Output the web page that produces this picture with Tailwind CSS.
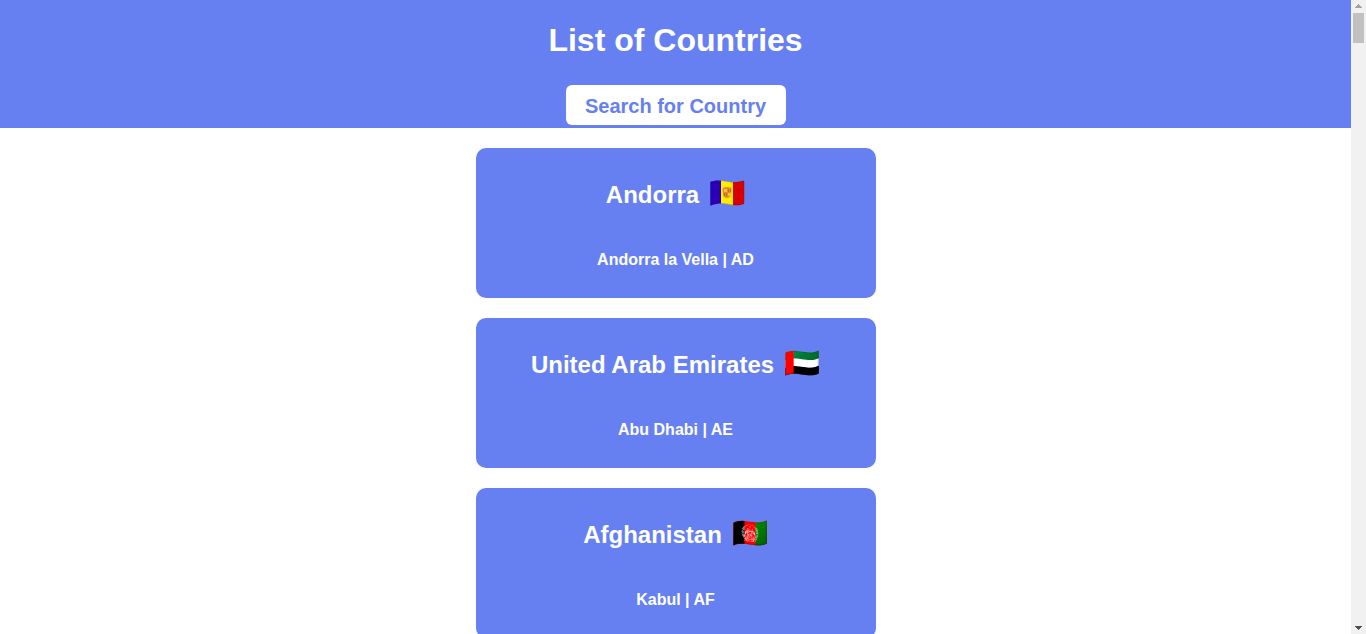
<!DOCTYPE html>
<html lang="en" class="h-full">
<head>
<meta charset="utf-8">
<title>List of Countries</title>
<script src="https://cdn.jsdelivr.net/npm/@tailwindcss/browser@4"></script>
</head>
<body class="flex h-screen overflow-hidden bg-white font-['Liberation_Sans',Arial,sans-serif] font-bold text-white">
<div class="min-w-0 flex-1 overflow-hidden">
  <header class="flex h-32 flex-col items-center bg-[#6680f1] pt-5">
    <h1 class="text-[32px] leading-10">List of Countries</h1>
    <button type="button" class="mt-[25px] h-10 w-[220px] rounded-md bg-white pt-0.5 text-xl text-[#6680f1]">Search for Country</button>
  </header>
  <main class="flex flex-col items-center gap-5 py-5">
    <article class="flex h-[150px] w-[400px] shrink-0 flex-col items-center rounded-[10px] bg-[#6680f1] pt-[29px]">
      <h2 class="flex h-9 items-center gap-[11px] text-2xl">Andorra
        <svg class="mb-1 h-[26px] w-[35px]" viewBox="0 0 35 26" role="img" aria-label="Flag of Andorra">
          <defs><clipPath id="wave"><path d="M.3 2.6Q.3 2 1 1.6C6 -.3 12 .3 17.5 1.5S29 2.2 33.2 .8Q34.2 .4 34.2 1.3V23Q34.2 23.6 33.5 23.9C29 25.8 23 25.4 17.5 24.2S6 23.6 1.2 25.4Q.3 25.7 .3 24.8Z"/></clipPath></defs>
          <g clip-path="url(#wave)">
            <path fill="#2a00b4" d="M0 0h11v26H0z"/><path fill="#ffec00" d="M11 0h12v26H11z"/><path fill="#d80000" d="M23 0h12v26H23z"/>
            <path fill="#dc9028" d="M12.500 8q4.500-2 9 0l-.5 7q-1 3-4 3t-4-3z"/>
            <path fill="#f3c03c" d="M14 9h3v3h-3zM18 13h3v3h-3z"/><path fill="#c86432" d="M18 9h1v3h-1zM20 9h1v3h-1zM14 13h1v3h-1zM16 13h1v3h-1z"/>
            <path fill="none" stroke="#101030" stroke-opacity=".25" d="M.3 2.6Q.3 2 1 1.600C6 -.3 12 .3 17.5 1.5S29 2.2 33.2 .8Q34.2 .4 34.2 1.3V23Q34.2 23.6 33.5 23.9C29 25.8 23 25.4 17.5 24.2S6 23.6 1.2 25.4Q.3 25.7 .3 24.8Z"/>
          </g>
        </svg>
      </h2>
      <p class="mt-[35px] text-base">Andorra la Vella | AD</p>
    </article>
    <article class="flex h-[150px] w-[400px] shrink-0 flex-col items-center rounded-[10px] bg-[#6680f1] pt-[29px]">
      <h2 class="flex h-9 items-center gap-[10px] text-2xl">United Arab Emirates <span class="mb-1 text-[29px] leading-8">🇦🇪</span></h2>
      <p class="mt-[35px] text-base">Abu Dhabi | AE</p>
    </article>
    <article class="flex h-[150px] w-[400px] shrink-0 flex-col items-center rounded-[10px] bg-[#6680f1] pt-[29px]">
      <h2 class="flex h-9 items-center gap-[10px] text-2xl">Afghanistan <span class="mb-1 text-[29px] leading-8">🇦🇫</span></h2>
      <p class="mt-[35px] text-base">Kabul | AF</p>
    </article>
  </main>
</div>
<div class="flex w-[15px] shrink-0 flex-col items-center justify-between bg-[#f1f1f1]" aria-hidden="true">
  <div class="flex flex-col items-center">
    <svg class="h-[13px] w-[15px]" viewBox="0 0 15 13" shape-rendering="crispEdges"><path fill="#a3a3a3" d="M7 4h1v1h1v1h1v1h1v1H4V7h1V6h1V5h1z"/></svg>
    <div class="h-[30px] w-[11px] bg-[#c1c1c1]"></div>
  </div>
  <svg class="h-[13px] w-[15px]" viewBox="0 0 15 13" shape-rendering="crispEdges"><path fill="#505050" d="M4 5h7v1h-1v1H9v1H8v1H7V8H6V7H5V6H4z"/></svg>
</div>
</body>
</html>
